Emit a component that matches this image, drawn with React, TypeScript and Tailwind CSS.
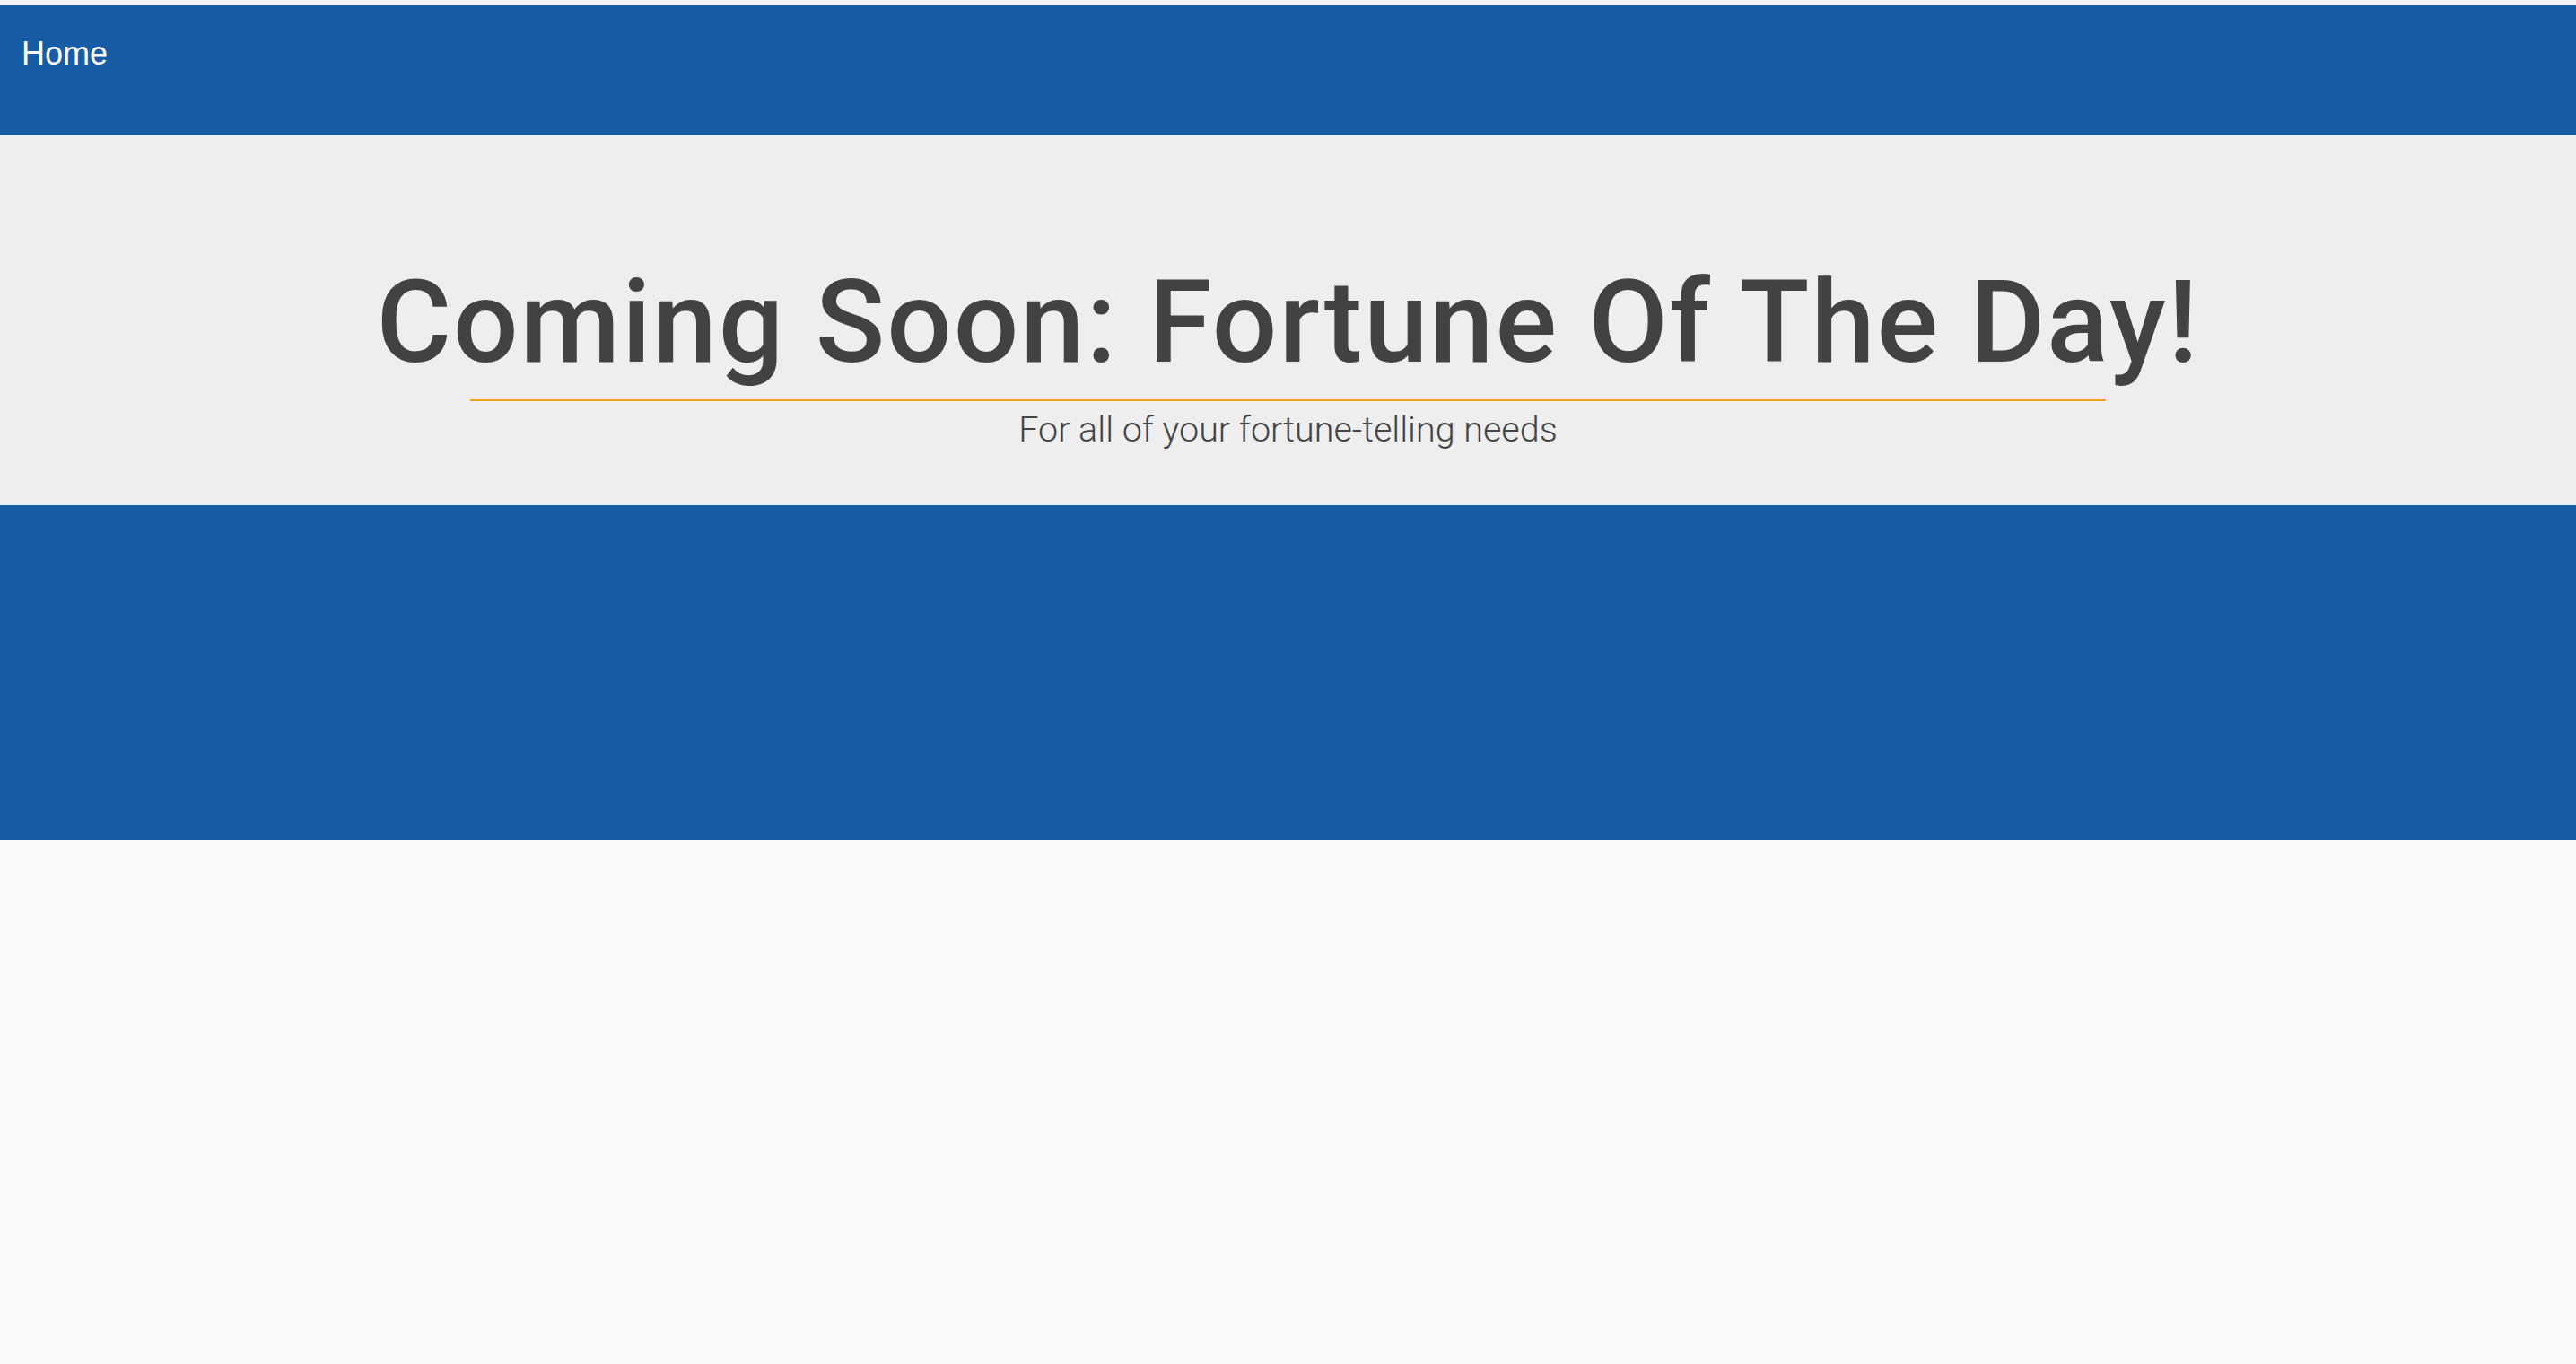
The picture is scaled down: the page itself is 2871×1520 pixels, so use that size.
import React from 'react'

export default function App() {
  return (
    <div className="min-h-screen w-full bg-[#f9f9f9] flex flex-col" style={{ fontFamily: '"Liberation Sans", Arial, sans-serif' }}>
      {/* thin strip above the nav */}
      <div className="h-[6px] bg-[#f4f4f4]" />

      {/* Nav */}
      <nav className="h-[144px] bg-[#195ca6] pl-[24px] pt-[36px]">
        <a className="text-white text-[36px] leading-none">Home</a>
      </nav>

      {/* Hero */}
      <header className="h-[413px] bg-[#eeeeee] flex flex-col items-center pt-[145px]">
        <h1 className="text-[128px] leading-none text-[#424242] font-medium tracking-[1.9px] whitespace-nowrap" style={{ fontFamily: 'Roboto, "Liberation Sans", sans-serif' }}>
          Coming Soon: Fortune Of The Day!
        </h1>
        <div className="mt-[22px] w-[1823px] h-[2px] bg-[#f5a11e]" />
        <p className="mt-[12px] text-[39.5px] leading-none text-[#444444] font-light" style={{ fontFamily: 'Roboto, "Liberation Sans", sans-serif' }}>
          For all of your fortune-telling needs
        </p>
      </header>

      {/* Blue band */}
      <section className="h-[373px] bg-[#195ca6]" />
    </div>
  )
}
